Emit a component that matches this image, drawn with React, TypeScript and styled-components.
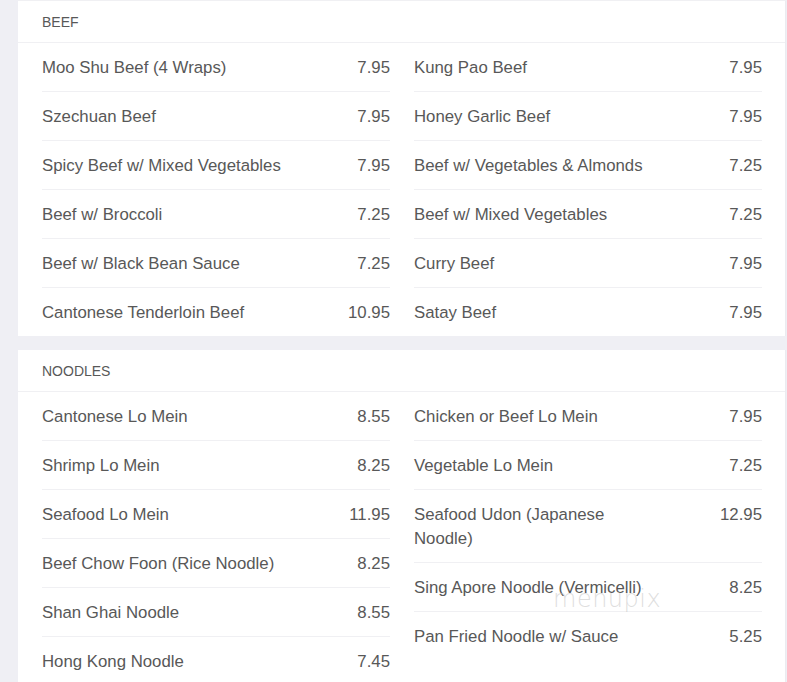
import React from "react";
import styled, { createGlobalStyle } from "styled-components";

const Global = createGlobalStyle`
  html, body { margin: 0; padding: 0; background: #efeff4; }
  body { font-family: "Liberation Sans", Arial, sans-serif; color: #585858; }
`;

const Page = styled.div`
  padding-left: 18px;
  padding-right: 1px;
  position: relative;
`;

const Section = styled.section<{ $first?: boolean }>`
  background: #fff;
  border-top: ${(p) => (p.$first ? "1px solid #f0f0f3" : "none")};
  border-right: 1px solid #ebebf0;
  margin-bottom: 14px;
`;

const Header = styled.div`
  height: 41px;
  display: flex;
  align-items: center;
  padding-left: 24px;
  font-size: 14px;
  text-transform: uppercase;
  color: #585858;
  border-bottom: 1px solid #f0f0f3;
`;

const Columns = styled.div`
  display: grid;
  grid-template-columns: 1fr 1fr;
  column-gap: 24px;
  padding: 0 23px 0 24px;
`;

const List = styled.div`
  display: flex;
  flex-direction: column;
`;

const Row = styled.div`
  display: flex;
  justify-content: space-between;
  align-items: flex-start;
  padding: 13px 0 11px;
  line-height: 24px;
  font-size: 16.8px;
  border-bottom: 1px solid #f0f0f3;
  &:last-child { border-bottom: none; }
`;

const Name = styled.span`
  max-width: 70%;
`;

const Price = styled.span`
  text-align: right;
`;

const Watermark = styled.div`
  position: absolute;
  left: 553px;
  top: 585px;
  font-family: "DejaVu Sans", sans-serif;
  font-weight: 200;
  font-size: 24px;
  letter-spacing: 0.5px;
  color: rgba(190, 190, 190, 0.5);
  pointer-events: none;
`;

type Item = [string, string];

const beefLeft: Item[] = [
  ["Moo Shu Beef (4 Wraps)", "7.95"],
  ["Szechuan Beef", "7.95"],
  ["Spicy Beef w/ Mixed Vegetables", "7.95"],
  ["Beef w/ Broccoli", "7.25"],
  ["Beef w/ Black Bean Sauce", "7.25"],
  ["Cantonese Tenderloin Beef", "10.95"],
];
const beefRight: Item[] = [
  ["Kung Pao Beef", "7.95"],
  ["Honey Garlic Beef", "7.95"],
  ["Beef w/ Vegetables & Almonds", "7.25"],
  ["Beef w/ Mixed Vegetables", "7.25"],
  ["Curry Beef", "7.95"],
  ["Satay Beef", "7.95"],
];
const noodleLeft: Item[] = [
  ["Cantonese Lo Mein", "8.55"],
  ["Shrimp Lo Mein", "8.25"],
  ["Seafood Lo Mein", "11.95"],
  ["Beef Chow Foon (Rice Noodle)", "8.25"],
  ["Shan Ghai Noodle", "8.55"],
  ["Hong Kong Noodle", "7.45"],
];
const noodleRight: Item[] = [
  ["Chicken or Beef Lo Mein", "7.95"],
  ["Vegetable Lo Mein", "7.25"],
  ["Seafood Udon (Japanese Noodle)", "12.95"],
  ["Sing Apore Noodle (Vermicelli)", "8.25"],
  ["Pan Fried Noodle w/ Sauce", "5.25"],
];

const MenuList = ({ items }: { items: Item[] }) => (
  <List>
    {items.map(([n, p]) => (
      <Row key={n}>
        <Name>{n}</Name>
        <Price>{p}</Price>
      </Row>
    ))}
  </List>
);

export default function App() {
  return (
    <Page>
      <Global />
      <Section $first>
        <Header>Beef</Header>
        <Columns>
          <MenuList items={beefLeft} />
          <MenuList items={beefRight} />
        </Columns>
      </Section>
      <Section>
        <Header>Noodles</Header>
        <Columns>
          <MenuList items={noodleLeft} />
          <MenuList items={noodleRight} />
        </Columns>
      </Section>
      <Watermark>menupix</Watermark>
    </Page>
  );
}
